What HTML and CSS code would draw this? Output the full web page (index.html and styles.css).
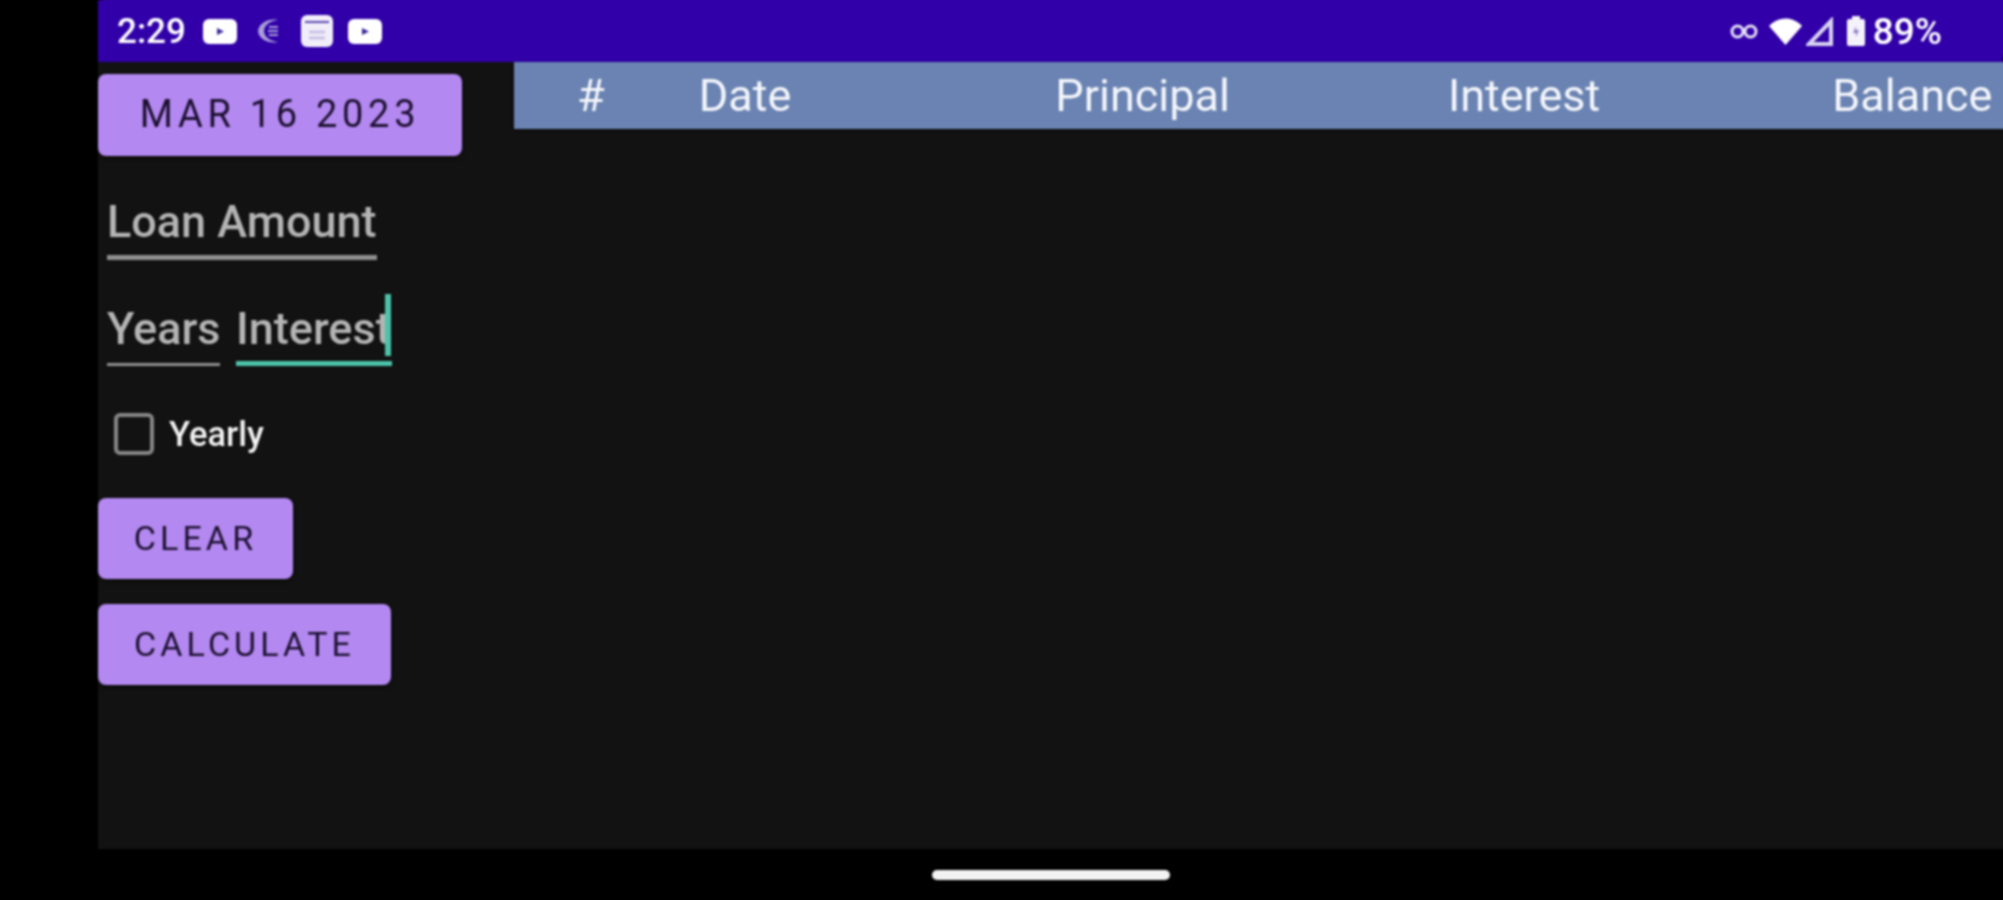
FILE: index.html
```html
<!DOCTYPE html>
<html lang="en">
<head>
    <meta charset="UTF-8">
    <title>Loan Calculator</title>
    <link rel="stylesheet" href="styles.css">
</head>
<body>
    <div class="screen">
        <!-- Status bar -->
        <header class="status-bar">
            <div class="status-left">
                <span class="time">2:29</span>
                <svg class="icon-yt" viewBox="0 0 34 25"><rect width="34" height="25" rx="6" fill="#fff"/><path d="M14 9l7 3.500-7 3.500z" fill="#3a2a9a"/></svg>
                <svg class="icon-moon" viewBox="0 0 23 26"><path d="M21 2C12 3 7 8 7 13s5 10 14 11c-8 2-19-2-20-11C2 5 12 0 21 2z" fill="#a99fd8"/><path d="M12 9h9M11 13h10M12 17h9" stroke="#a99fd8" stroke-width="2"/></svg>
                <svg class="icon-cal" viewBox="0 0 32 32"><rect width="32" height="32" rx="6" fill="#f1eefa"/><path d="M4 7h24" stroke="#5a48ad" stroke-width="2"/><path d="M8 17h16M8 23h16" stroke="#c9c2e6" stroke-width="3"/></svg>
                <svg class="icon-yt" viewBox="0 0 34 25"><rect width="34" height="25" rx="6" fill="#fff"/><path d="M14 9l7 3.500-7 3.500z" fill="#3a2a9a"/></svg>
            </div>
            <div class="status-right">
                <svg class="icon-link" viewBox="0 0 28 15"><circle cx="7.500" cy="7.500" r="5.500" fill="none" stroke="#e6e2f5" stroke-width="3"/><circle cx="20.500" cy="7.500" r="5.500" fill="none" stroke="#e6e2f5" stroke-width="3"/></svg>
                <svg class="icon-wifi" viewBox="0 0 33 27"><path d="M0 8C9-2 24-2 33 8L16.500 27z" fill="#fff"/></svg>
                <svg class="icon-signal" viewBox="0 0 27 29"><path d="M25 4v23H3z" fill="none" stroke="#d8d3ee" stroke-width="4"/></svg>
                <svg class="icon-batt" viewBox="0 0 18 30"><path d="M5 0h8v3h3a2 2 0 0 1 2 2v23a2 2 0 0 1-2 2H2a2 2 0 0 1-2-2V5a2 2 0 0 1 2-2h3z" fill="#f4f2fb"/><path d="M9 10l-3 7h3v4l3-7H9z" fill="#8f83c8"/></svg>
                <span class="percent">89%</span>
            </div>
        </header>

        <main class="content">
            <section class="form">
                <button class="btn date-btn">MAR 16 2023</button>
                <div class="field field-loan">Loan Amount</div>
                <div class="field-row">
                    <div class="field field-years">Years</div>
                    <div class="field field-active">Interest<span class="caret"></span></div>
                </div>
                <label class="check-row"><span class="checkbox"></span>Yearly</label>
                <button class="btn clear-btn">CLEAR</button>
                <button class="btn calc-btn">CALCULATE</button>
            </section>

            <section class="table">
                <div class="table-head">
                    <span class="col-num">#</span>
                    <span class="col-date">Date</span>
                    <span class="col-principal">Principal</span>
                    <span class="col-interest">Interest</span>
                    <span class="col-balance">Balance</span>
                </div>
            </section>
        </main>

        <div class="nav-bar"><div class="home-pill"></div></div>
    </div>
</body>
</html>
```

FILE: styles.css
```css
body {
    margin: 0;
    background: #000;
    font-family: 'Roboto', sans-serif;
    overflow: hidden;
}
.screen {
    display: flex;
    flex-direction: column;
    height: 900px;
    padding-left: 98px;
    filter: blur(0.8px);
}

/* Status bar */
.status-bar {
    display: flex;
    justify-content: space-between;
    align-items: center;
    height: 62px;
    flex: none;
    background: #3100a9;
    box-shadow: 6px -6px 0 #3100a9;
    color: #fff;
    padding: 0 61px 0 19px;
}
.status-left, .status-right {
    display: flex;
    align-items: center;
}
.time {
    font-size: 35px;
    font-weight: 500;
    width: 86px;
}
.percent {
    font-size: 37px;
    font-weight: 500;
    margin-left: 8px;
}
.icon-yt { width: 34px; height: 25px; }
.icon-moon { width: 23px; height: 26px; margin: 0 21px 0 20px; }
.icon-cal { width: 32px; height: 32px; margin-right: 15px; }
.icon-link { width: 28px; height: 15px; margin-right: 11px; }
.icon-wifi { width: 33px; height: 27px; margin-right: 4px; }
.icon-signal { width: 27px; height: 29px; margin-right: 14px; }
.icon-batt { width: 18px; height: 30px; }

.content {
    display: flex;
    flex: 1;
    background: #121212;
    box-shadow: 6px 0 0 #121212;
}

/* Left form */
.form {
    display: flex;
    flex-direction: column;
    align-items: flex-start;
    width: 416px;
    flex: none;
}
.btn {
    display: block;
    border: none;
    border-radius: 8px;
    background: #b388f0;
    color: #1c1030;
    font-family: inherit;
    font-weight: 400;
    height: 81px;
    padding: 0 0 2px;
    box-shadow: 0 2px 4px rgba(0, 0, 0, 0.5);
}
.date-btn {
    width: 364px;
    height: 82px;
    margin-top: 12px;
    font-size: 38px;
    letter-spacing: 4.7px;
}
.clear-btn {
    width: 195px;
    font-size: 34px;
    letter-spacing: 4.1px;
}
.calc-btn {
    width: 293px;
    margin-top: 25px;
    font-size: 34px;
    letter-spacing: 4.1px;
}
.field {
    position: relative;
    color: #b4b4b4;
    font-size: 45px;
    font-weight: 500;
    line-height: 48px;
    white-space: nowrap;
    border-bottom: 3px solid #8f8f8f;
    padding-bottom: 10px;
}
.field-loan {
    width: 270px;
    margin: 42px 0 0 9px;
    border-bottom-width: 5px;
    padding-bottom: 9px;
}
.field-row {
    display: flex;
    gap: 16px;
    margin: 45px 0 0 9px;
}
.field-years {
    width: 113px;
}
.field-active {
    width: 156px;
    border-bottom: 5px solid #4cc3a9;
    padding-bottom: 8px;
}
.caret {
    position: absolute;
    right: 1px;
    top: -11px;
    width: 6px;
    height: 62px;
    background: #4cc3a9;
}
.check-row {
    display: flex;
    align-items: center;
    color: #f2f2f2;
    font-size: 34.5px;
    font-weight: 500;
    margin: 47px 0 43px 16px;
    line-height: 42px;
}
.checkbox {
    width: 32px;
    height: 34px;
    border: 4px solid #858585;
    border-radius: 6px;
    margin-right: 15px;
}

/* Table */
.table {
    flex: 1;
}
.table-head {
    display: flex;
    align-items: center;
    height: 67px;
    background: #6a83b2;
    color: #f4f6fb;
    font-size: 45px;
    box-shadow: 6px 0 0 #6a83b2, 0 1px 3px rgba(0, 0, 0, 0.6);
    white-space: nowrap;
}
.col-num { margin-left: 63px; }
.col-date { margin-left: 94px; }
.col-principal { margin-left: 264px; }
.col-interest { margin-left: 218px; }
.col-balance { margin-left: 232px; }

/* Bottom nav */
.nav-bar {
    display: flex;
    justify-content: center;
    align-items: center;
    height: 51px;
    flex: none;
    background: #000;
}
.home-pill {
    width: 238px;
    height: 10px;
    border-radius: 5px;
    background: #f2f2f2;
}
```
